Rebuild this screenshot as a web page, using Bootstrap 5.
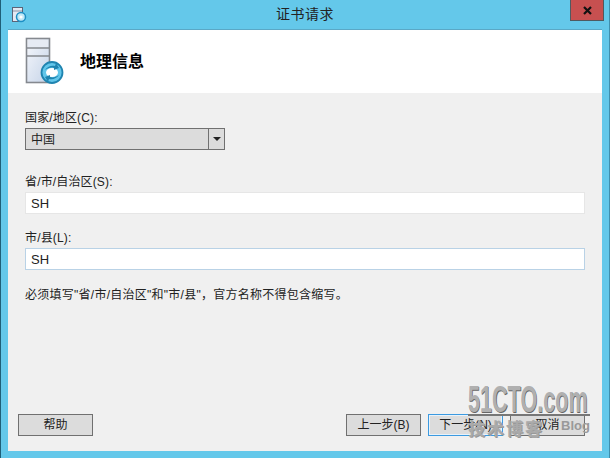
<!DOCTYPE html>
<html lang="zh-CN">
<head>
    <meta charset="UTF-8">
    <meta name="viewport" content="width=device-width, initial-scale=1.0">
    <title>证书请求</title>
    <link href="https://cdn.jsdelivr.net/npm/bootstrap@5.3.2/dist/css/bootstrap.min.css" rel="stylesheet">
    <style>
        html, body { height: 458px; overflow: hidden; }
        body { font-family: "Liberation Sans", "Noto Sans CJK SC", sans-serif; font-size: 12px; color: #222; background: #64c8ea; }
        .win-frame { width: 610px; height: 458px; background: #64c8ea; border-left: 1px solid #1f5f78; border-right: 1px solid #3f8fae; position: relative; overflow: hidden; }
        .win-title { height: 30px; padding-left: 11px; }
        .win-ico { margin-top: 7px; }
        .win-title-text { font-size: 14px; line-height: 16px; margin-top: 6px; letter-spacing: .5px; }
        .win-close { position: absolute; top: 0; right: 5px; width: 34px; height: 21px; background: #c75050; border: 1px solid #4f5a60; border-top: 0; }
        .win-client { margin: 0 7px 7px 7px; background: #f0f0f0; box-shadow: 0 -1px 0 #5aa8c6; }
        .wiz-head { height: 63px; background: #fff; padding-left: 17px; gap: 15px; }
        .wiz-head h1 { font-size: 16px; font-weight: 700; margin: 0; color: #000; line-height: 20px; }
        .wiz-body { padding: 16px 17px 0 17px; }
        .fld-label { display: block; line-height: 16px; padding-top: 1px; margin: 0 0 2px 0; letter-spacing: .15px; }
        .fld-group-a { margin-bottom: 23px; }
        .fld-group-b { margin-bottom: 15px; }
        .fld-input { height: 22px; background: #fff; border: 1px solid #e6e6e6; padding: 1px 5px 0 5px; line-height: 20px; font-size: 13px; }
        .fld-input-focus { border-color: #b9d2e6; }
        .fld-select { width: 200px; height: 22px; background: #dcdcdc; border: 1px solid #707070; font-size: 12px; }
        .fld-select-val { padding: 1px 0 0 5px; line-height: 20px; }
        .fld-select-btn { width: 16px; border-left: 1px solid #707070; }
        .fld-arrow { width: 0; height: 0; border-left: 4px solid transparent; border-right: 4px solid transparent; border-top: 4px solid #222; }
        .wiz-note { line-height: 16px; margin-top: 17px; letter-spacing: .26px; }
        .wiz-foot { padding: 0 17px 15px 10px; }
        .wiz-btn-row { gap: 7px; }
        .wiz-btn { width: 75px; height: 22px; background: #dcdcdc; border: 1px solid #707070; border-radius: 0; padding: 0; font-size: 12px; line-height: 20px; color: #222; }
        .wiz-btn-def { border-color: #3c9ae0; box-shadow: inset 0 0 0 1px #e8f2fa; }
        .wm-box { position: absolute; left: 467px; top: 385px; width: 126px; height: 60px; pointer-events: none; }
        .wm-main { font-family: "Liberation Sans", sans-serif; font-weight: 700; font-size: 36px; line-height: 29px; transform: scaleX(.6); transform-origin: left top; white-space: nowrap; text-shadow: 1px 1px 0 #666; color: #b0b0b0; }
        .wm-line { height: 2px; background: #777; width: 122px; margin-top: 0; }
        .wm-sub { font-weight: 700; font-size: 17px; line-height: 24px; padding-top: 2px; white-space: nowrap; letter-spacing: 2px; color: #aaa; text-shadow: 1px 1px 0 #999; }
        .wm-blog { font-family: "Liberation Sans", sans-serif; font-size: 13px; font-weight: 700; letter-spacing: 0; margin-left: 17px; color: #999; text-shadow: none; position: relative; top: -5px; }
    </style>
</head>
<body>
<div class="win-frame d-flex flex-column">
    <div class="win-title d-flex flex-shrink-0 position-relative">
        <svg width="15" height="16" viewBox="0 0 15 16" class="flex-shrink-0 win-ico">
            <rect x="0.5" y="0.5" width="10" height="14" fill="#e3e8f2" stroke="#5b6478"/>
            <path d="M1 4h9" stroke="#8a93a5"/>
            <circle cx="9" cy="10" r="4.5" fill="#bfe8f7" stroke="#1d8fc4" stroke-width="1.5"/>
            <circle cx="9" cy="10" r="1.6" fill="#fff"/>
        </svg>
        <div class="win-title-text text-center position-absolute start-0 end-0">证书请求</div>
        <div class="win-close d-flex align-items-center justify-content-center">
            <svg width="9" height="9" viewBox="0 0 9 9"><path d="M1 1l7 7M8 1L1 8" stroke="#111" stroke-width="2.2"/></svg>
        </div>
    </div>
    <div class="win-client flex-grow-1 d-flex flex-column">
        <div class="wiz-head d-flex align-items-center flex-shrink-0">
            <svg width="40" height="50" viewBox="0 0 40 50" class="flex-shrink-0">
                <defs>
                    <linearGradient id="towerFill" x1="0" y1="0" x2="1" y2="1">
                        <stop offset="0" stop-color="#f6f8fc"/>
                        <stop offset="1" stop-color="#c5d3e8"/>
                    </linearGradient>
                </defs>
                <rect x="1.5" y="1.5" width="23" height="44" fill="url(#towerFill)" stroke="#85898f" stroke-width="1.6"/>
                <path d="M2 11h22M2 19h22" stroke="#85898f" stroke-width="1.4"/>
                <path d="M3 3h20v7H3z" fill="#e6ebf4"/>
                <circle cx="27" cy="35.5" r="10.5" fill="#62c6ea" stroke="#1f84b0" stroke-width="1.8"/>
                <ellipse cx="27" cy="35.5" rx="6" ry="4.5" fill="#fff"/>
                <path d="M20 33c2-3 6-5 10-4l1-3 3 5-5 2 0-2c-3-1-6 0-9 2z" fill="#1f84b0"/>
                <path d="M34 38c-2 3-6 5-10 4l-1 3-3-5 5-2 0 2c3 1 6 0 9-2z" fill="#1f84b0"/>
            </svg>
            <h1>地理信息</h1>
        </div>
        <div class="wiz-body flex-grow-1">
            <div class="fld-group-a">
                <label class="fld-label">国家/地区(C):</label>
                <div class="fld-select d-flex">
                    <div class="fld-select-val flex-grow-1">中国</div>
                    <div class="fld-select-btn d-flex align-items-center justify-content-center"><span class="fld-arrow"></span></div>
                </div>
            </div>
            <div class="fld-group-b">
                <label class="fld-label">省/市/自治区(S):</label>
                <div class="fld-input">SH</div>
            </div>
            <div>
                <label class="fld-label">市/县(L):</label>
                <div class="fld-input fld-input-focus">SH</div>
            </div>
            <p class="wiz-note mb-0">必须填写"省/市/自治区"和"市/县"，官方名称不得包含缩写。</p>
        </div>
        <div class="wiz-foot d-flex justify-content-between flex-shrink-0">
            <button type="button" class="wiz-btn">帮助</button>
            <div class="wiz-btn-row d-flex">
                <button type="button" class="wiz-btn">上一步(B)</button>
                <button type="button" class="wiz-btn wiz-btn-def">下一步(N)</button>
                <button type="button" class="wiz-btn">取消</button>
            </div>
        </div>
    </div>
    <div class="wm-box">
        <div class="wm-main">51CTO.com</div>
        <div class="wm-line"></div>
        <div class="wm-sub">技术博客<span class="wm-blog">Blog</span></div>
    </div>
</div>
<script src="https://cdn.jsdelivr.net/npm/bootstrap@5.3.2/dist/js/bootstrap.bundle.min.js"></script>
</body>
</html>
